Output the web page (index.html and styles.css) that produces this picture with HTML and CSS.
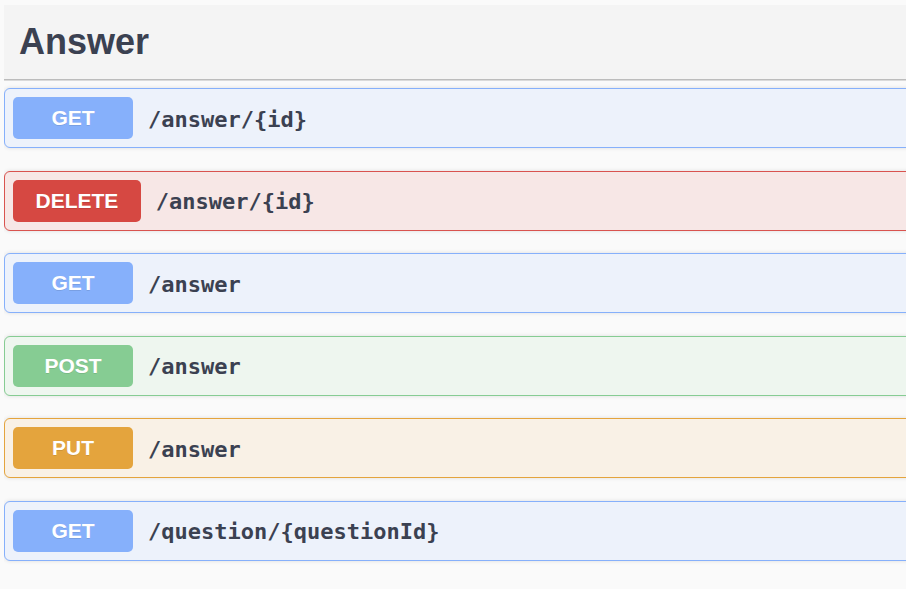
FILE: index.html
```html
<!DOCTYPE html>
<html>
<head>
<meta charset="utf-8">
<link rel="stylesheet" href="styles.css">
</head>
<body>
<div class="tag-section">
  <div class="tag-header"><h3 class="tag-title">Answer</h3></div>
  <div class="ops">
    <div class="op op-get"><span class="method">GET</span><span class="path">/answer/{id}</span></div>
    <div class="op op-delete"><span class="method">DELETE</span><span class="path">/answer/{id}</span></div>
    <div class="op op-get"><span class="method">GET</span><span class="path">/answer</span></div>
    <div class="op op-post"><span class="method">POST</span><span class="path">/answer</span></div>
    <div class="op op-put"><span class="method">PUT</span><span class="path">/answer</span></div>
    <div class="op op-get"><span class="method">GET</span><span class="path">/question/{questionId}</span></div>
  </div>
</div>
</body>
</html>
```
FILE: styles.css
```css
html, body {
  margin: 0;
  padding: 0;
  background: #fafafa;
  overflow: hidden;
  width: 906px;
  height: 589px;
}
body {
  font-family: "Liberation Sans", Arial, sans-serif;
  color: #3b4151;
}
.tag-section {
  margin: 5px 0 0 4px;
  width: 902px;
  height: 584px;
  overflow: hidden;
}
.tag-header {
  width: 1000px;
  height: 75px;
  background: #f4f4f4;
  border-bottom: 1px solid #bcbcbc;
  box-shadow: 0 1px 0 #dadada;
  display: flex;
  align-items: center;
  padding-left: 15px;
  box-sizing: border-box;
}
.tag-title {
  margin: 0;
  font-size: 36px;
  font-weight: bold;
  line-height: normal;
  color: #3b4151;
}
.ops {
  width: 1000px;
  margin-top: 8px;
  display: flex;
  flex-direction: column;
  gap: 22.6px;
}
.op {
  height: 58px;
  border: 1px solid;
  border-radius: 6px;
  display: flex;
  align-items: center;
  padding: 0 8px;
  box-shadow: 0 0 4px rgba(0,0,0,0.12);
}
.method {
  min-width: 120px;
  height: 42px;
  border-radius: 5px;
  display: flex;
  align-items: center;
  justify-content: center;
  color: #fff;
  font-size: 21px;
  font-weight: bold;
  text-shadow: 0 1px 0 rgba(0,0,0,0.1);
  padding: 0 22.5px;
  box-sizing: border-box;
}
.path {
  margin-left: 15px;
  font-family: "DejaVu Sans Mono", "Liberation Mono", monospace;
  font-weight: bold;
  font-size: 22px;
  color: #3b4151;
  padding-top: 2px;
}
.op-get { background: #edf2fb; border-color: #86b0fb; }
.op-get .method { background: #86b0fb; }
.op-delete { background: #f7e7e6; border-color: #d9534f; }
.op-delete .method { background: #d64842; }
.op-post { background: #eef6ef; border-color: #86cc93; }
.op-post .method { background: #86cc93; }
.op-put { background: #f9f1e6; border-color: #e4a43d; }
.op-put .method { background: #e4a43d; }
```
